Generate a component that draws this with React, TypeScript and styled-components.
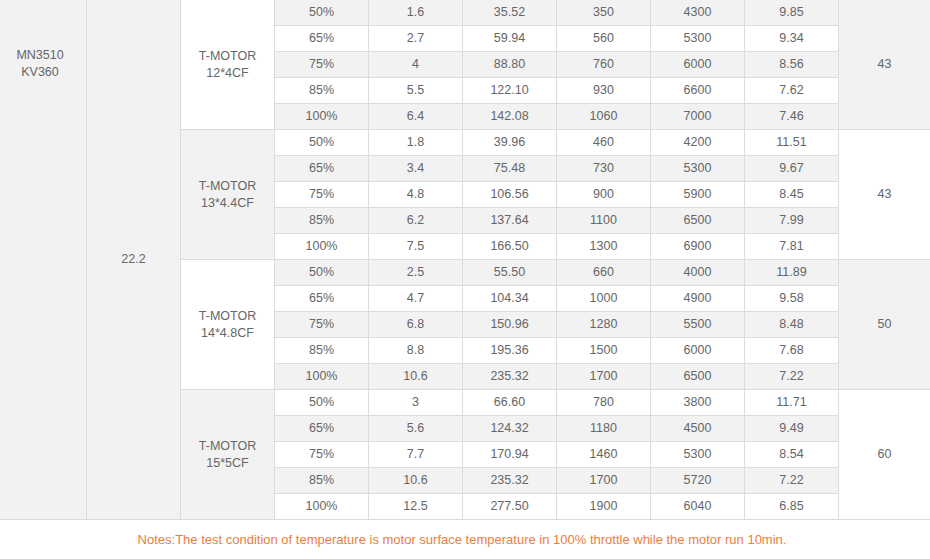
import React from "react";
import styled, { createGlobalStyle } from "styled-components";

const Global = createGlobalStyle`
  html, body { margin: 0; padding: 0; background: #fff; }
  body { font-family: "Liberation Sans", Arial, sans-serif; }
`;

const Page = styled.div`
  width: 930px;
  height: 559px;
  overflow: hidden;
  background: #fff;
`;

const Table = styled.div`
  display: grid;
  grid-template-columns: 87px 94px 94px repeat(6, 94px) 1fr;
  grid-auto-rows: 26px;
`;

const Cell = styled.div<{ $gray?: boolean; $span?: number; $top?: boolean }>`
  grid-row: span ${(p) => p.$span ?? 1};
  box-sizing: border-box;
  border-right: 1px solid #dcdcdc;
  border-bottom: 1px solid #dcdcdc;
  background: ${(p) => (p.$gray ? "#f2f2f2" : "#ffffff")};
  color: #666;
  font-size: 12.5px;
  line-height: 17px;
  text-align: center;
  display: flex;
  flex-direction: column;
  align-items: center;
  justify-content: ${(p) => (p.$top ? "flex-start" : "center")};
  padding-top: ${(p) => (p.$top ? "47px" : "0")};
  padding-right: ${(p) => (p.$top ? "6px" : "0")};
`;

const LastCell = styled(Cell)`
  border-right: none;
`;

const Note = styled.div`
  color: #e8803f;
  font-size: 13px;
  line-height: 16px;
  text-align: center;
  padding-top: 12px;
  padding-right: 6px;
`;

type Row = [string, string, string, string, string, string];
type Group = { prop: string; temp: string; rows: Row[] };

const groups: Group[] = [
  {
    prop: "12*4CF",
    temp: "43",
    rows: [
      ["50%", "1.6", "35.52", "350", "4300", "9.85"],
      ["65%", "2.7", "59.94", "560", "5300", "9.34"],
      ["75%", "4", "88.80", "760", "6000", "8.56"],
      ["85%", "5.5", "122.10", "930", "6600", "7.62"],
      ["100%", "6.4", "142.08", "1060", "7000", "7.46"],
    ],
  },
  {
    prop: "13*4.4CF",
    temp: "43",
    rows: [
      ["50%", "1.8", "39.96", "460", "4200", "11.51"],
      ["65%", "3.4", "75.48", "730", "5300", "9.67"],
      ["75%", "4.8", "106.56", "900", "5900", "8.45"],
      ["85%", "6.2", "137.64", "1100", "6500", "7.99"],
      ["100%", "7.5", "166.50", "1300", "6900", "7.81"],
    ],
  },
  {
    prop: "14*4.8CF",
    temp: "50",
    rows: [
      ["50%", "2.5", "55.50", "660", "4000", "11.89"],
      ["65%", "4.7", "104.34", "1000", "4900", "9.58"],
      ["75%", "6.8", "150.96", "1280", "5500", "8.48"],
      ["85%", "8.8", "195.36", "1500", "6000", "7.68"],
      ["100%", "10.6", "235.32", "1700", "6500", "7.22"],
    ],
  },
  {
    prop: "15*5CF",
    temp: "60",
    rows: [
      ["50%", "3", "66.60", "780", "3800", "11.71"],
      ["65%", "5.6", "124.32", "1180", "4500", "9.49"],
      ["75%", "7.7", "170.94", "1460", "5300", "8.54"],
      ["85%", "10.6", "235.32", "1700", "5720", "7.22"],
      ["100%", "12.5", "277.50", "1900", "6040", "6.85"],
    ],
  },
];

export default function App() {
  const cells: React.ReactNode[] = [];
  cells.push(
    <Cell key="motor" $gray $span={20} $top>
      <span>MN3510</span>
      <span>KV360</span>
    </Cell>
  );
  cells.push(
    <Cell key="volt" $gray $span={20}>
      22.2
    </Cell>
  );
  groups.forEach((g, gi) => {
    g.rows.forEach((r, ri) => {
      const idx = gi * 5 + ri;
      const gray = idx % 2 === 0;
      if (ri === 0) {
        cells.push(
          <Cell key={`p${gi}`} $gray={gi % 2 === 1} $span={5}>
            <span>T-MOTOR</span>
            <span>{g.prop}</span>
          </Cell>
        );
      }
      r.forEach((v, ci) => {
        cells.push(
          <Cell key={`c${idx}-${ci}`} $gray={gray}>
            {v}
          </Cell>
        );
      });
      if (ri === 0) {
        cells.push(
          <LastCell key={`t${gi}`} $gray={gi % 2 === 0} $span={5}>
            {g.temp}
          </LastCell>
        );
      }
    });
  });

  return (
    <Page>
      <Global />
      <Table>{cells}</Table>
      <Note>
        Notes:The test condition of temperature is motor surface temperature in
        100% throttle while the motor run 10min.
      </Note>
    </Page>
  );
}
